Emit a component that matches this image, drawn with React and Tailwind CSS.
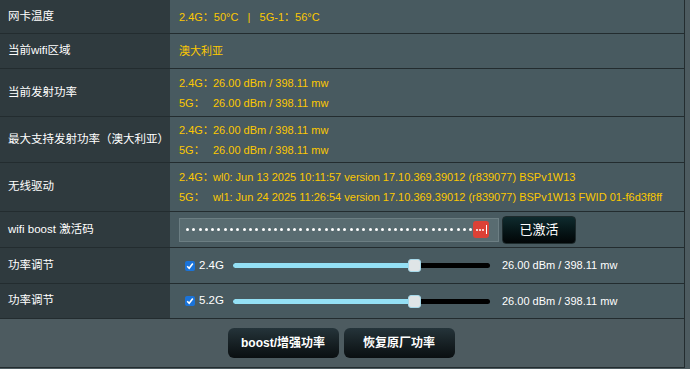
import React from "react";

const font = { fontFamily: '"Liberation Sans", "Noto Sans CJK SC", sans-serif' };

function Row({ label, h, children }) {
  return (
    <div className={`flex border-b border-[#232c2f] ${h}`}>
      <div className="w-[170px] shrink-0 bg-[#2f3a3e] border-r border-[#2f3a3e] flex items-center pl-2 text-white text-[11.5px]">
        {label}
      </div>
      <div className="flex-1 bg-[#485a60] flex flex-col justify-center pl-[9px] text-[11px] text-[#fcc800]">
        {children}
      </div>
    </div>
  );
}

function TwoLine({ a, b }) {
  return (
    <div className="flex flex-col gap-[6px] leading-[14px]">
      <div className="flex">
        <span className="w-[34px]">2.4G：</span>
        <span>{a}</span>
      </div>
      <div className="flex">
        <span className="w-[34px]">5G：</span>
        <span>{b}</span>
      </div>
    </div>
  );
}

function Slider({ band }) {
  return (
    <div className="flex items-center h-full">
      <span className="w-[10px] h-[10px] ml-[6px] bg-[#1a73d9] rounded-[2px] flex items-center justify-center">
        <svg width="8" height="8" viewBox="0 0 8 8">
          <path d="M1.2 4.2 L3.2 6.2 L6.8 1.6" stroke="white" strokeWidth="1.6" fill="none" />
        </svg>
      </span>
      <span className="ml-[4px] w-[34px] text-white text-[11.5px]">{band}</span>
      <div className="relative w-[257px] h-[5px] bg-black rounded-full">
        <div className="absolute left-0 top-0 h-[5px] w-[180px] bg-[#94e0f5] rounded-full" />
        <div className="absolute left-[175px] top-[-4px] w-[13px] h-[13px] rounded-[3px] bg-[#dfe5e7] border border-[#a6d9ea]" />
      </div>
      <span className="ml-[12px] text-white">26.00 dBm / 398.11 mw</span>
    </div>
  );
}

export default function App() {
  const dots = Array.from({ length: 46 });
  return (
    <div className="w-[690px] h-[369px] bg-[#4d5b60] overflow-hidden" style={font}>
      <div className="w-[685px] border-r border-[#232c2f] bg-[#4d5b60]">
        <Row label="网卡温度" h="h-[34px]">
          <div className="leading-[14px]">2.4G：50°C&nbsp;&nbsp;&nbsp;|&nbsp;&nbsp;&nbsp;5G-1：56°C</div>
        </Row>
        <Row label="当前wifi区域" h="h-[35px]">
          <div className="leading-[14px]">澳大利亚</div>
        </Row>
        <Row label="当前发射功率" h="h-[48px]">
          <TwoLine a="26.00 dBm / 398.11 mw" b="26.00 dBm / 398.11 mw" />
        </Row>
        <Row label="最大支持发射功率（澳大利亚）" h="h-[46px]">
          <TwoLine a="26.00 dBm / 398.11 mw" b="26.00 dBm / 398.11 mw" />
        </Row>
        <Row label="无线驱动" h="h-[49px]">
          <TwoLine
            a="wl0: Jun 13 2025 10:11:57 version 17.10.369.39012 (r839077) BSPv1W13"
            b="wl1: Jun 24 2025 11:26:54 version 17.10.369.39012 (r839077) BSPv1W13 FWID 01-f6d3f8ff"
          />
        </Row>
        <Row label="wifi boost 激活码" h="h-[36px]">
          <div className="flex items-center">
            <div className="w-[320px] h-[24px] bg-[#596c71] border border-[#6c7e83] flex items-center pl-[6px] pr-[9px] justify-between">
              <span className="flex gap-[3.3px]">
                {dots.map((_, i) => (
                  <span key={i} className="w-[3px] h-[3px] rounded-full bg-white" />
                ))}
              </span>
              <span className="w-[16px] h-[17px] bg-[#dc4136] rounded-[3px] flex items-center justify-center gap-[1px]">
                <span className="w-[2px] h-[2px] bg-white rounded-full" />
                <span className="w-[2px] h-[2px] bg-white rounded-full" />
                <span className="w-[2px] h-[2px] bg-white rounded-full" />
                <span className="ml-[1px] w-px h-[9px] bg-white" />
              </span>
            </div>
            <button className="ml-[3px] w-[74px] h-[28px] rounded-[4px] bg-gradient-to-b from-[#0f2b2e] to-[#020607] border border-[#1d2a2c] text-white text-[13px]">
              已激活
            </button>
          </div>
        </Row>
        <Row label="功率调节" h="h-[36px]">
          <Slider band="2.4G" />
        </Row>
        <Row label="功率调节" h="h-[35px]">
          <Slider band="5.2G" />
        </Row>
        <div className="h-[49px] flex items-center justify-center gap-[5px] border-b border-[#232c2f] pr-[2px]">
          <button className="w-[111px] h-[30px] rounded-[6px] bg-gradient-to-b from-[#25343a] to-[#0a0f11] text-white text-[12px] font-bold">
            boost/增强功率
          </button>
          <button className="w-[111px] h-[30px] rounded-[6px] bg-gradient-to-b from-[#25343a] to-[#0a0f11] text-white text-[12px] font-bold">
            恢复原厂功率
          </button>
        </div>
      </div>
    </div>
  );
}
